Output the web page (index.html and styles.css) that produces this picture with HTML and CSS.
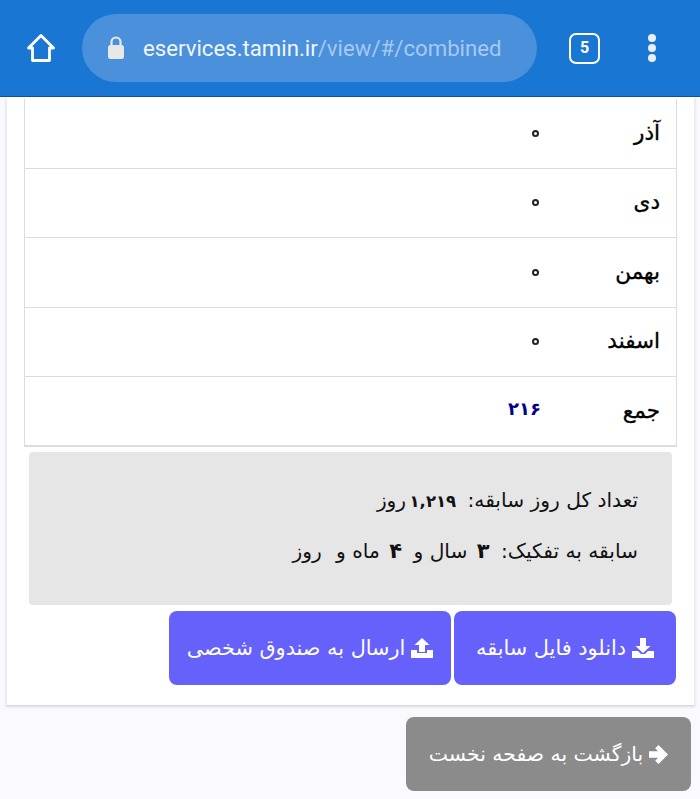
FILE: index.html
```html
<!DOCTYPE html>
<html lang="fa">
<head>
<meta charset="utf-8">
<title>سابقه</title>
<link rel="stylesheet" href="styles.css">
</head>
<body>
<header class="bar">
  <svg class="home" viewBox="0 0 32 32" width="32" height="32"><path d="M16 3.500 3.500 16H7.500V28.500H24.500V16H28.500Z" fill="none" stroke="#fff" stroke-width="2.800" stroke-linejoin="round"/></svg>
  <div class="url">
    <svg class="lock" viewBox="0 0 20 26" width="20" height="26"><path d="M5.500 11V7a4.500 4.500 0 0 1 9 0v4" fill="none" stroke="#e8e8e8" stroke-width="2.200"/><rect x="2" y="10" width="16" height="14" rx="2.500" fill="#e8e8e8"/></svg>
    <span class="addr"><b>eservices.tamin.ir</b>/view/#/combined</span>
  </div>
  <div class="tabs">5</div>
  <div class="menu"><i></i><i></i><i></i></div>
</header>
<main dir="rtl">
  <section class="card">
    <div class="table">
      <div class="row"><span class="m">آذر</span><span class="v"><span class="zero">۰</span></span></div>
      <div class="row"><span class="m">دی</span><span class="v"><span class="zero">۰</span></span></div>
      <div class="row"><span class="m">بهمن</span><span class="v"><span class="zero">۰</span></span></div>
      <div class="row"><span class="m">اسفند</span><span class="v"><span class="zero">۰</span></span></div>
      <div class="row"><span class="m">جمع</span><span class="v sum">۲۱۶</span></div>
    </div>
    <div class="summary">
      <p>تعداد کل روز سابقه: <b class="total">۱,۲۱۹</b> روز</p>
      <p>سابقه به تفکیک: <b class="part">۳</b> سال و <b class="part">۴</b> ماه و <b class="part"></b>روز</p>
    </div>
    <div class="actions">
      <a class="btn primary w1">
        <svg viewBox="0 0 22 20" width="22" height="20"><path d="M8 0h6v8h4.500L11 15 3.500 8H8ZM0 13h6l3 3h4l3-3h6v7H0Z" fill="#fff"/></svg>
        دانلود فایل سابقه
      </a>
      <a class="btn primary w2">
        <svg viewBox="0 0 22 20" width="22" height="20"><path d="M8 14V7H3.500L11 0l7.500 7H14v7ZM0 12h6v3h10v-3h6v8H0Z" fill="#fff"/></svg>
        ارسال به صندوق شخصی
      </a>
    </div>
  </section>
  <a class="btn back">
    <svg viewBox="0 0 20 20" width="19" height="19"><path d="M10 0l10 10-10 10-3.500-3.500 3-3H0v-7h9.500l-3-3Z" fill="#fff"/></svg>
    بازگشت به صفحه نخست
  </a>
</main>
</body>
</html>
```
FILE: styles.css
```css
* { box-sizing: border-box; }
html, body { margin: 0; height: 799px; overflow: hidden; }
body { background: #f9f9ff; font-family: "DejaVu Sans", sans-serif; color: #111; }

.bar { height: 97px; background: #1976d2; border-bottom: 1px solid #15528f; display: flex; align-items: center; padding: 0 31px 0 25px; }
.home { flex: none; }
.url { margin-left: 25px; width: 455px; height: 68px; border-radius: 34px; background: #4a90db; display: flex; align-items: center; padding-left: 24px; gap: 17px; }
.lock { flex: none; }
.addr { font: 22.200px "Roboto", sans-serif; color: #a6c9ee; white-space: nowrap; }
.addr b { font-weight: 400; color: #f0f6fd; }
.tabs { margin-left: 32px; width: 31px; height: 31px; border: 2.500px solid #fff; border-radius: 7px; color: #fff; font: 700 16px/26px "Roboto", sans-serif; text-align: center; }
.menu { margin-left: 48px; display: flex; flex-direction: column; gap: 2px; }
.menu i { width: 8px; height: 8px; border-radius: 50%; background: #e9eef5; }

.card { margin: 0 5px 0 6px; height: 609px; background: #fff; border-bottom: 1px solid #d9d9d9; border-left: 1px solid #ececec; border-right: 1px solid #ececec; box-shadow: 0 1px 3px rgba(0,0,0,.12); padding: 2px 17px 0; }
.table { border: 1px solid #dcdcdc; border-top: 0; width: 653px; }
.row { height: 69.500px; border-bottom: 1px solid #dcdcdc; display: flex; align-items: center; padding-right: 16px; }
.row:last-child { height: 69px; }
.m { width: 119px; margin-bottom: 2px; font-size: 21.500px; color: #000; -webkit-text-stroke: .35px #000; }
.v { font-size: 17px; display: flex; }
.zero { width: 7px; height: 7px; margin-right: 2px; border: 2px solid #222; border-radius: 50%; color: transparent; font-size: 5px; line-height: 3px; overflow: hidden; }
.sum { color: #00008b; font-weight: 700; font-size: 18px; margin-bottom: 6px; }

.summary { margin: 5px 5px 0 5px; height: 153px; background: #e6e6e6; border-radius: 4px; padding: 35px 34px 0 0; font-size: 20.200px; }
.summary p { margin: 0 0 23px; line-height: 26px; }
.summary b { font-weight: 700; margin-inline: 5px 3px; }
.summary .total { font-size: 16.500px; margin-inline: 5px -3px; }
.part { font-size: 21px; }

.actions { display: flex; gap: 3px; margin: 6px 1px 0 0; }
.btn { display: flex; align-items: center; justify-content: center; gap: 6px; height: 74px; border-radius: 8px; color: #fff; font-size: 20.800px; white-space: nowrap; }
.primary { background: #6761fb; }
.w1 { width: 222px; }
.w2 { width: 282px; }
.back { background: #8b8b8b; width: 285px; margin: 11px 9px 0 0; font-size: 20.400px; }
```
